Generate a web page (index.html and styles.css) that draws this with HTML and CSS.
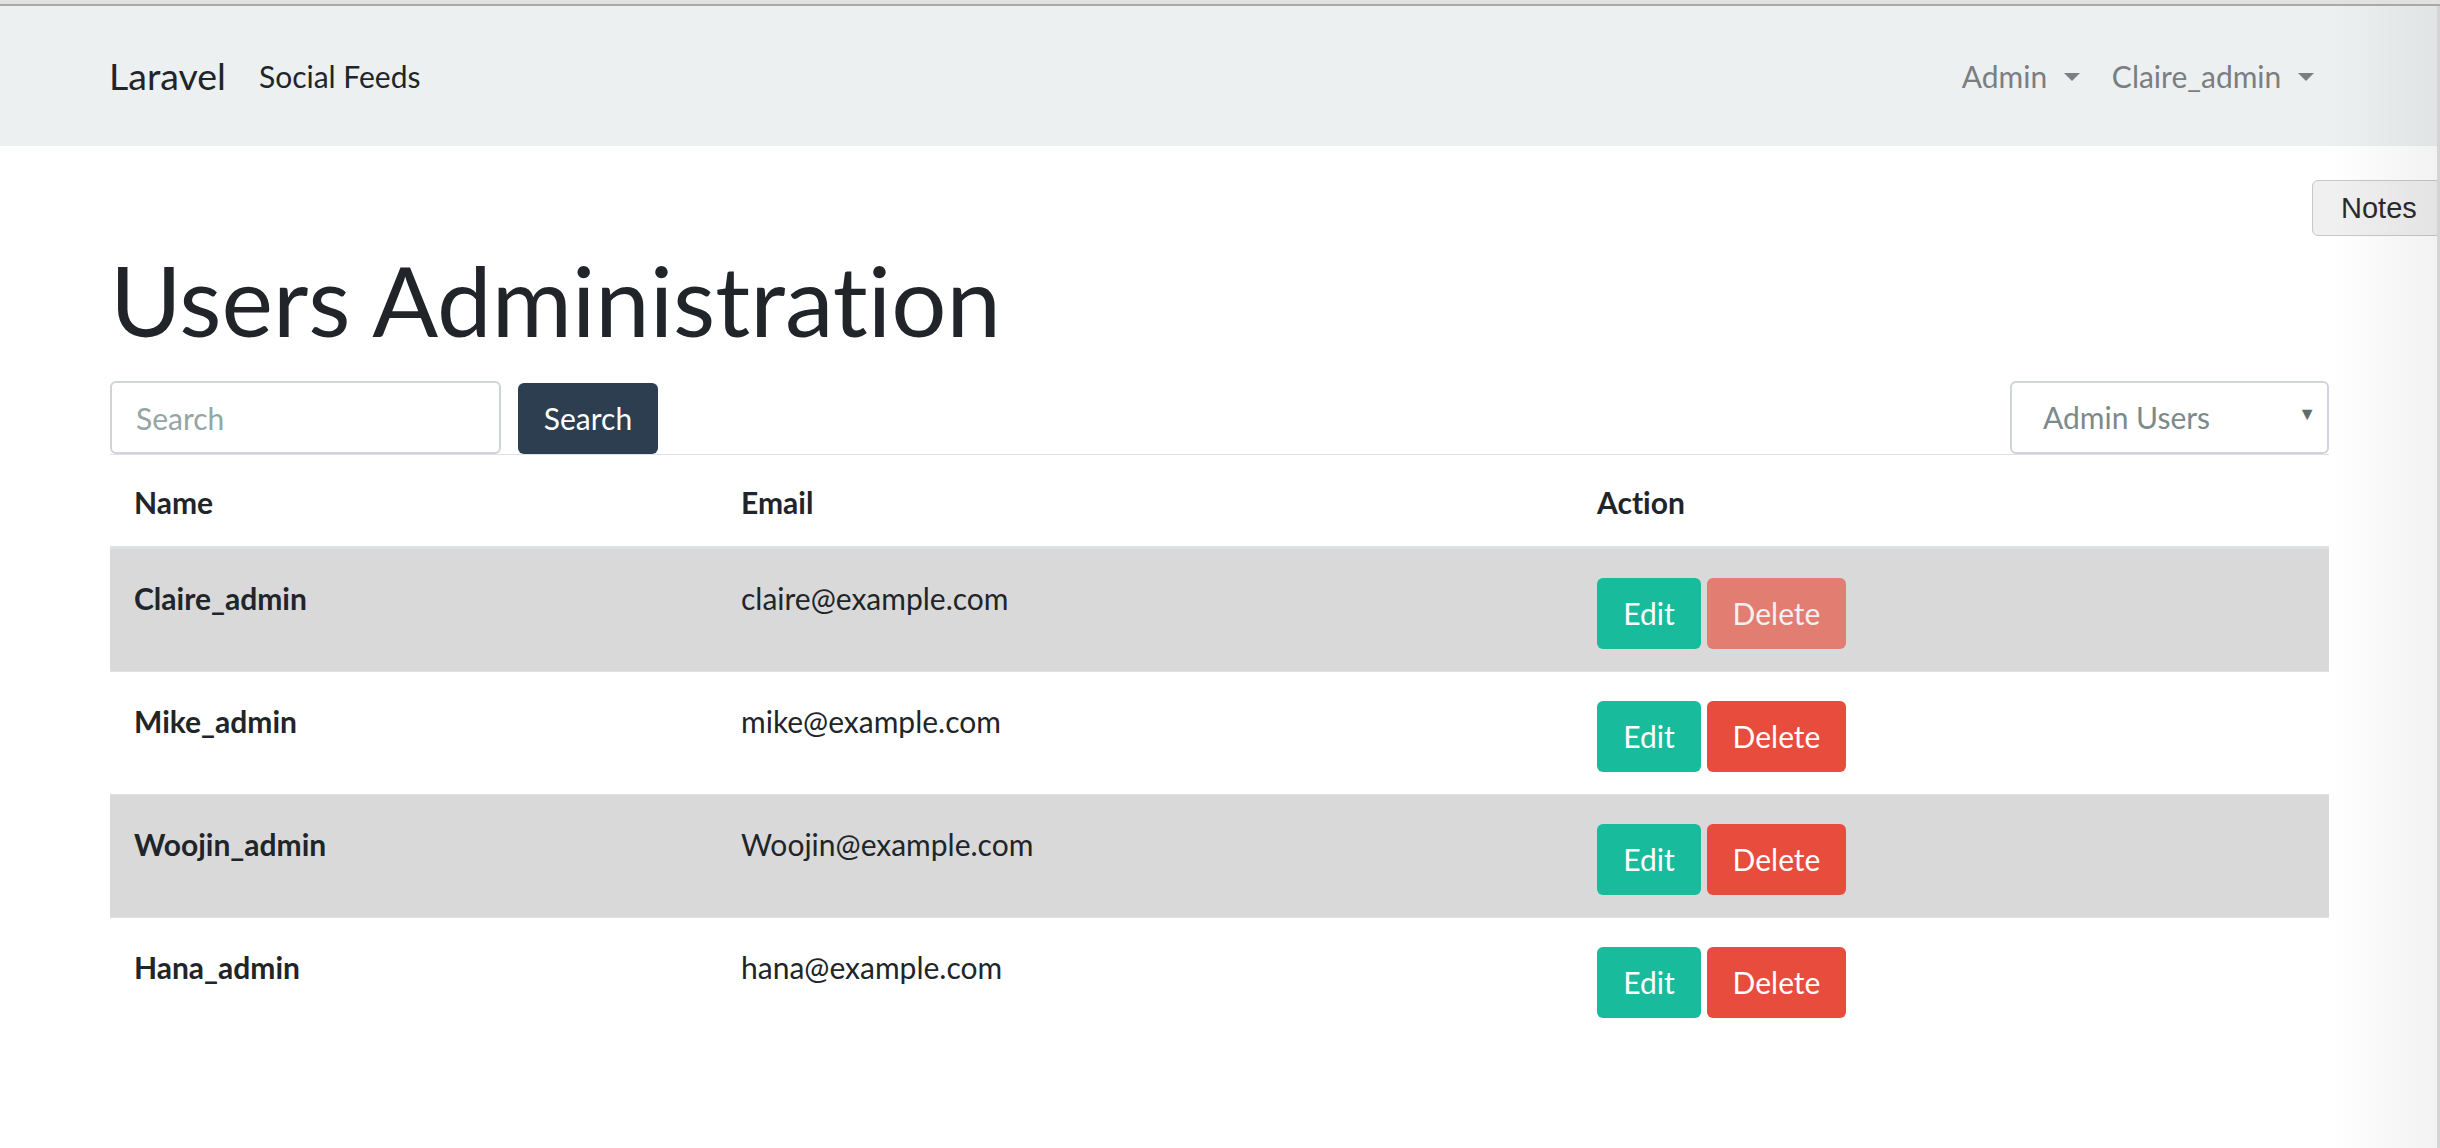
FILE: index.html
```html
<!DOCTYPE html>
<html lang="en">
<head>
<meta charset="utf-8">
<title>Users Administration</title>
<link rel="stylesheet" href="styles.css">
</head>
<body>
<div class="topline"></div>
<nav class="navbar">
  <div class="nav-left">
    <a class="brand">Laravel</a>
    <a class="nav-link dark">Social Feeds</a>
  </div>
  <div class="nav-right">
    <a class="nav-link muted">Admin <span class="caret"></span></a>
    <a class="nav-link muted">Claire_admin <span class="caret"></span></a>
  </div>
</nav>
<main class="container">
  <h1 class="title">Users Administration</h1>
  <div class="toolbar">
    <form class="search">
      <input class="search-input" type="text" placeholder="Search">
      <button class="btn btn-primary" type="button">Search</button>
    </form>
    <div class="select">
      <span>Admin Users</span>
      <span class="select-arrow">&#9660;</span>
    </div>
  </div>
  <table class="users">
    <thead>
      <tr><th class="c-name">Name</th><th class="c-email">Email</th><th>Action</th></tr>
    </thead>
    <tbody>
      <tr class="alt">
        <td class="name">Claire_admin</td><td>claire@example.com</td>
        <td class="act"><button class="btn btn-success">Edit</button><button class="btn btn-danger disabled">Delete</button></td>
      </tr>
      <tr>
        <td class="name">Mike_admin</td><td>mike@example.com</td>
        <td class="act"><button class="btn btn-success">Edit</button><button class="btn btn-danger">Delete</button></td>
      </tr>
      <tr class="alt">
        <td class="name">Woojin_admin</td><td>Woojin@example.com</td>
        <td class="act"><button class="btn btn-success">Edit</button><button class="btn btn-danger">Delete</button></td>
      </tr>
      <tr>
        <td class="name">Hana_admin</td><td>hana@example.com</td>
        <td class="act"><button class="btn btn-success">Edit</button><button class="btn btn-danger">Delete</button></td>
      </tr>
    </tbody>
  </table>
</main>
<button class="notes">Notes</button>
<div class="side-shade"></div>
</body>
</html>
```
FILE: styles.css
```css
* { box-sizing: border-box; }
html, body { margin: 0; padding: 0; }
body {
  font-family: Lato, "Noto Sans", sans-serif;
  font-size: 30px;
  line-height: 1.5;
  color: #212529;
  background: #fff;
  min-height: 1148px;
  overflow: hidden;
  position: relative;
  font-variant-ligatures: none;
}
.topline {
  height: 6px;
  background: #e3e1de;
  border-bottom: 2px solid #a9a9a9;
}
.navbar {
  height: 140px;
  background: #ecf0f1;
  display: flex;
  align-items: center;
  justify-content: space-between;
  padding: 0 126px 0 109px;
}
.nav-left, .nav-right { display: flex; align-items: center; }
.brand { font-size: 37.5px; color: #212529; margin-right: 33px; }
.nav-link { font-size: 30px; }
.nav-link.dark { color: #212529; }
.nav-link.muted { color: #7b7e80; margin-left: 32px; }
.caret {
  display: inline-block;
  width: 0; height: 0;
  border-left: 8px solid transparent;
  border-right: 8px solid transparent;
  border-top: 8px solid #7b7e80;
  vertical-align: middle;
  margin-left: 9px;
  position: relative; top: -3px;
}
.container { padding: 0 111px 0 110px; }
.title {
  font-size: 97.5px;
  font-weight: 400;
  line-height: 1.2;
  margin: 95px 0 0;
  color: #212529;
}
.toolbar {
  display: flex;
  justify-content: space-between;
  align-items: flex-start;
  margin-top: 23px;
}
.search { display: flex; gap: 17px; }
.search-input {
  width: 391px; height: 73px;
  border: 2px solid #ced4da;
  border-radius: 6px;
  padding: 0 24px;
  font-family: inherit;
  font-size: 30px;
  color: #212529;
}
.search-input::placeholder { color: #95a5a6; }
.btn {
  font-family: inherit;
  font-size: 30px;
  line-height: 45px;
  border: 0;
  border-radius: 6px;
  color: #fff;
  padding: 0;
  height: 71px;
  text-align: center;
  vertical-align: top;
}
.btn-primary { background: #2c3e50; width: 140px; margin-top: 2px; }
.btn-success { background: #18bc9c; width: 104px; }
.btn-danger { background: #e74c3c; width: 139px; margin-left: 6px; }
.btn.disabled { opacity: 0.65; }
.select {
  width: 319px; height: 73px;
  border: 2px solid #ced4da;
  border-radius: 6px;
  display: flex; align-items: center; justify-content: space-between;
  padding: 0 11px 0 31px;
  color: #7b8a8b;
}
.select-arrow { font-size: 18px; color: #5f6b6c; position: relative; top: -4px; }
.users {
  width: 100%;
  border-collapse: collapse;
  border-top: 1px solid #dee2e6;
}
.users th {
  text-align: left;
  font-weight: 700;
  line-height: 45px;
  padding: 25px 24px 21px;
  border-bottom: 3px solid #dee2e6;
}
.c-name { width: 607px; }
.c-email { width: 856px; }
.users td {
  padding: 27px 24px 50px;
  line-height: 45px;
  vertical-align: top;
  border-top: 1px solid #dee2e6;
}
.users td.act { padding: 29px 24px 22px; }
.users td.name { font-weight: 700; }
.users tr.alt td { background: #d9d9d9; }
.act { white-space: nowrap; }
.notes {
  position: absolute;
  top: 180px; right: -20px;
  height: 56px;
  width: 148px;
  text-align: left;
  padding: 0 0 0 28px;
  background: #f0f0f0;
  border: 1px solid #c8c8c8;
  border-radius: 6px;
  font-family: "Liberation Sans", Arial, sans-serif;
  font-size: 29px;
  color: #2a2a2a;
}
.side-shade {
  position: absolute;
  top: 6px; right: 0; bottom: 0;
  width: 110px;
  background: linear-gradient(to right, rgba(0,0,0,0), rgba(0,0,0,0.05));
  border-right: 3px solid #d4d4d4;
  pointer-events: none;
}
```
